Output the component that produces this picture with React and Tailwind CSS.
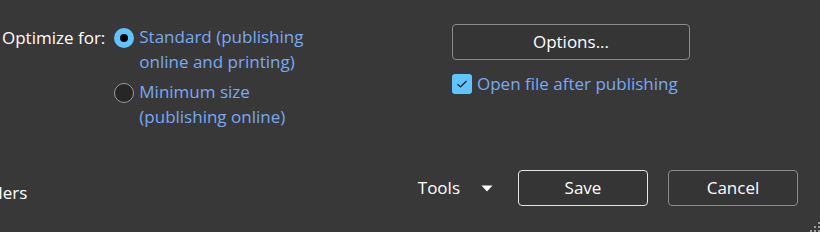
export default function App() {
  const font = { fontFamily: '"Open Sans", "Noto Sans", sans-serif' };
  return (
    <div
      className="w-[820px] h-[232px] bg-[#383838] text-[17px] text-white overflow-hidden relative flex flex-col"
      style={font}
    >
      <div className="flex pt-[24px]">
        {/* Optimize for */}
        <div className="flex w-[452px]">
          <span className="pl-[2px] pr-[9px] leading-[25px] mt-[1px]">Optimize for:</span>
          <div className="flex flex-col gap-[5px]">
            <label className="flex items-start gap-[5px]">
              <span className="w-[20px] h-[20px] mt-[4px] rounded-full bg-[#60c5ff] flex items-center justify-center shrink-0">
                <span className="w-[8px] h-[8px] rounded-full bg-black" />
              </span>
              <span className="text-[#7aa9f2] leading-[25px]">
                Standard (publishing
                <br />
                online and printing)
              </span>
            </label>
            <label className="flex items-start gap-[5px]">
              <span className="w-[20px] h-[20px] mt-[4px] rounded-full bg-[#262626] border border-[#9a9a9a] shrink-0" />
              <span className="text-[#7aa9f2] leading-[25px]">
                Minimum size
                <br />
                (publishing online)
              </span>
            </label>
          </div>
        </div>

        {/* Options */}
        <div className="flex flex-col">
          <button className="w-[238px] h-[36px] rounded-[4px] border border-[#8c8c8c] bg-[#353535] text-white">
            Options...
          </button>
          <label className="flex items-center gap-[5px] mt-[11px]">
            <span className="w-[20px] h-[20px] rounded-[3px] bg-[#60c5ff] flex items-center justify-center">
              <svg width="12" height="10" viewBox="0 0 12 10" fill="none">
                <path d="M1.5 5.2 L4.5 8 L10.5 2" stroke="#1a1a1a" strokeWidth="1.2" />
              </svg>
            </span>
            <span className="text-[#7aa9f2]">Open file after publishing</span>
          </label>
        </div>
      </div>

      {/* Footer */}
      <div className="flex items-center mt-auto mb-[26px] h-[36px]">
        <span className="self-end mb-[1px] ml-[-31px] leading-[25px] whitespace-nowrap">Folders</span>
        <div className="ml-auto flex items-center">
          <button className="flex items-center text-white">
            <span>Tools</span>
            <svg className="ml-[21px]" width="12" height="7" viewBox="0 0 12 7">
              <path d="M0.5 0.5 H11.5 L6 6.5 Z" fill="#ffffff" />
            </svg>
          </button>
          <button className="ml-[25px] w-[130px] h-[36px] rounded-[4px] border border-[#e6e6e6] bg-[#353535] text-white">
            Save
          </button>
          <button className="ml-[20px] mr-[22px] w-[130px] h-[36px] rounded-[4px] border border-[#8c8c8c] bg-[#353535] text-white">
            Cancel
          </button>
        </div>
      </div>

      {/* Resize grip */}
      <svg className="absolute right-0 bottom-0" width="10" height="10" viewBox="0 0 10 10">
        <rect x="8" y="0" width="2" height="2" fill="#9a9a9a" />
        <rect x="4" y="4" width="2" height="2" fill="#9a9a9a" />
        <rect x="8" y="4" width="2" height="2" fill="#9a9a9a" />
        <rect x="0" y="8" width="2" height="2" fill="#9a9a9a" />
        <rect x="4" y="8" width="2" height="2" fill="#9a9a9a" />
        <rect x="8" y="8" width="2" height="2" fill="#9a9a9a" />
      </svg>
    </div>
  );
}
